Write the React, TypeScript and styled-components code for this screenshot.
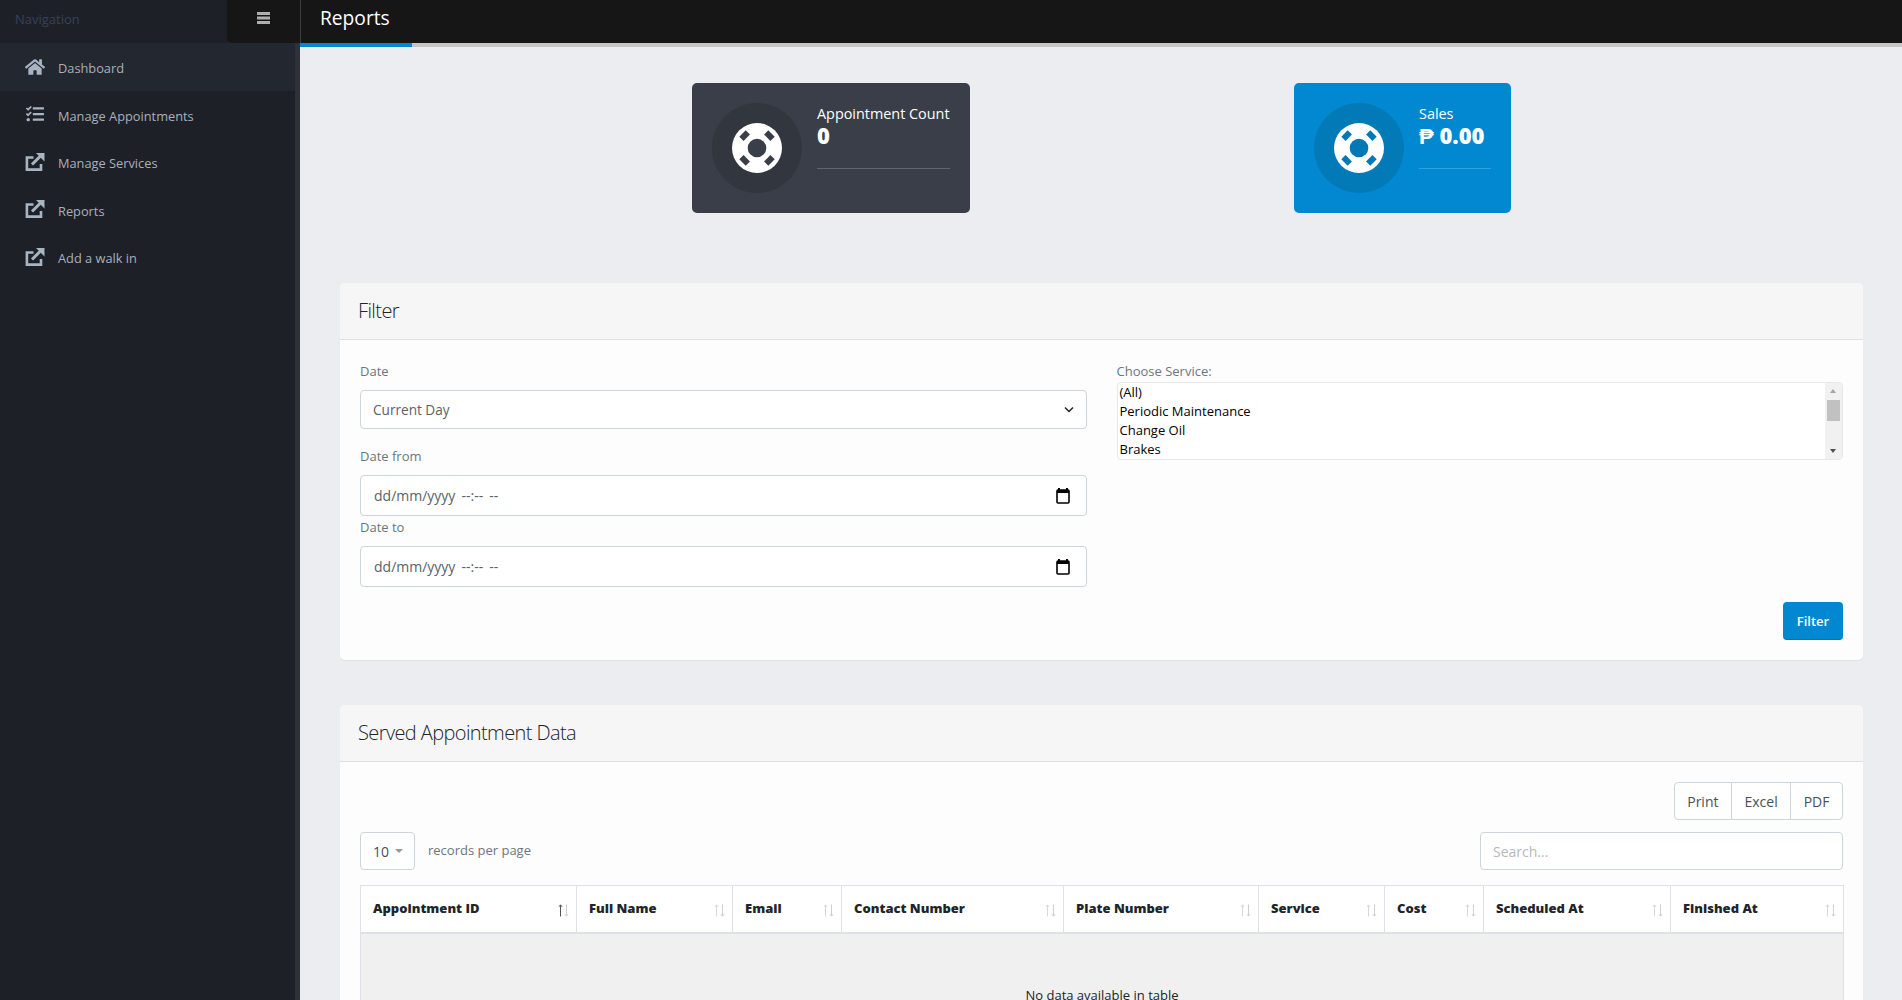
import styled, { createGlobalStyle } from "styled-components";
import { FaHome, FaTasks } from "react-icons/fa";

const GlobalStyle = createGlobalStyle`
    html, body {
        margin: 0;
        height: 100%;
        overflow: hidden;
    }
    body {
        font-family: "Open Sans", "Liberation Sans", sans-serif;
        font-size: 13px;
        color: #495057;
        background: #ebedf1;
        font-variant-ligatures: none;
    }
    * {
        box-sizing: border-box;
    }
`;

const Shell = styled.div`
    display: grid;
    grid-template-columns: 300px 1fr;
    height: 100vh;
    overflow: hidden;
`;

const Sidebar = styled.aside`
    display: flex;
    flex-direction: column;
    background: #1e2028;
    border-right: 5px solid #2e3138;
`;

const SideTop = styled.div`
    display: flex;
    align-items: stretch;
    justify-content: space-between;
    height: 43px;
    margin-right: -5px;
    background: #1e2028;
`;

const SideTitle = styled.span`
    padding: 0 15px;
    line-height: 39px;
    font-size: 13px;
    color: #384058;
`;

const Toggle = styled.button`
    display: flex;
    justify-content: center;
    width: 73px;
    padding: 12px 0 0;
    border: 0;
    border-bottom-left-radius: 5px;
    background: #161616;
`;

const MenuItem = styled.a<{ $active?: boolean }>`
    display: flex;
    align-items: center;
    height: 47.5px;
    padding: 3px 0 0 25px;
    gap: 13px;
    background: ${(props) => (props.$active ? "#232730" : "transparent")};
    color: #a9b0bb;
    font-size: 12.8px;
    svg {
        width: 20px;
        height: 18px;
        margin-top: -3px;
        color: #a9b4c2;
    }
`;

const Main = styled.div`
    min-width: 0;
    display: flex;
    flex-direction: column;
`;

const Topbar = styled.header`
    height: 43px;
    background: #161616;
    border-left: 1px solid #3c3c3c;
    padding-left: 19px;
    font-size: 19.2px;
    line-height: 35px;
    color: #ffffff;
`;

const TabStrip = styled.div`
    height: 4px;
    background: #c6c6c6;
`;

const TabMark = styled.div`
    width: 112px;
    height: 100%;
    background: #0288d1;
`;

const Content = styled.main`
    padding: 36px 39px 0 40px;
`;

const StatsRow = styled.div`
    display: flex;
    justify-content: center;
    gap: 324px;
    margin-bottom: 70px;
`;

const StatCard = styled.div<{ $bg: string }>`
    display: flex;
    gap: 15px;
    height: 130px;
    padding: 20px;
    border-radius: 5px;
    background: ${(props) => props.$bg};
    color: #ffffff;
`;

const StatIcon = styled.div<{ $bg: string }>`
    display: flex;
    align-items: center;
    justify-content: center;
    width: 90px;
    height: 90px;
    border-radius: 50%;
    background: ${(props) => props.$bg};
`;

const StatText = styled.div<{ $width: number }>`
    width: ${(props) => props.$width}px;
    padding-top: 1px;
`;

const StatLabel = styled.div`
    font-size: 14.4px;
    line-height: 20px;
    white-space: nowrap;
`;

const StatValue = styled.div`
    font-size: 22px;
    line-height: 22px;
    font-weight: 800;
    white-space: nowrap;
`;

const StatRule = styled.div`
    height: 1px;
    margin-top: 22px;
    background: rgba(255, 255, 255, 0.2);
`;

const Card = styled.section`
    margin-bottom: 45px;
    border-radius: 5px;
    background: #fdfdfd;
    box-shadow: 0 1px 1px rgba(0, 0, 0, 0.05);
`;

const CardHeader = styled.h2`
    height: 57px;
    margin: 0;
    padding: 0 18px;
    border-bottom: 1px solid #dddfe2;
    border-radius: 5px 5px 0 0;
    background: #f6f6f6;
    font-size: 20px;
    font-weight: 300;
    line-height: 56px;
    letter-spacing: -0.6px;
    color: #212529;
`;

const FilterBody = styled.div`
    padding: 21px 20px 20px 20px;
`;

const FormGrid = styled.div`
    display: grid;
    grid-template-columns: 1fr 1fr;
    column-gap: 30px;
`;

const Column = styled.div`
    display: flex;
    flex-direction: column;
`;

const FieldLabel = styled.label<{ $top?: number; $bottom?: number }>`
    margin-top: ${(props) => props.$top ?? 0}px;
    margin-bottom: ${(props) => props.$bottom ?? 9}px;
    line-height: 20px;
    font-size: 13px;
    color: #6c757d;
`;

const Field = styled.div<{ $height: number }>`
    display: flex;
    align-items: center;
    justify-content: space-between;
    height: ${(props) => props.$height}px;
    padding: 0 12px;
    border: 1px solid #ced4da;
    border-radius: 4px;
    background: #ffffff;
    font-size: 13.6px;
    color: #5a6268;
`;

const DateText = styled.span`
    padding-left: 1px;
    font-size: 14px;
    word-spacing: 2.5px;
`;

const ServiceBox = styled.div`
    position: relative;
    height: 78px;
    border: 1px solid #e6e8ea;
    border-radius: 4px;
    background: #ffffff;
    padding-top: 0;
    overflow: hidden;
`;

const ServiceOption = styled.div`
    padding-left: 2px;
    height: 19px;
    line-height: 19px;
    font-size: 13px;
    color: #000000;
`;

const ScrollTrack = styled.div`
    position: absolute;
    top: 0;
    right: 0;
    bottom: 0;
    width: 17px;
    background: #f1f1f1;
`;

const ScrollThumb = styled.div`
    position: absolute;
    top: 17px;
    left: 2px;
    width: 13px;
    height: 21px;
    background: #c1c1c1;
`;

const ScrollArrow = styled.div<{ $up?: boolean }>`
    position: absolute;
    left: 5px;
    ${(props) => (props.$up ? "top: 6px;" : "bottom: 6px;")}
    width: 0;
    height: 0;
    border-left: 3.5px solid transparent;
    border-right: 3.5px solid transparent;
    ${(props) => (props.$up ? "border-bottom: 4px solid #a3a3a3;" : "border-top: 4px solid #505050;")}
`;

const FilterActions = styled.div`
    display: flex;
    justify-content: flex-end;
    margin-top: 15px;
`;

const PrimaryButton = styled.button`
    width: 60px;
    height: 38px;
    border: 0;
    border-bottom: 1px solid #0277b6;
    border-radius: 4px;
    background: #0288d1;
    font: 600 13px "Open Sans", sans-serif;
    color: #ffffff;
`;

const TableBody = styled.div`
    padding: 20px 20px 0 20px;
`;

const ExportRow = styled.div`
    display: flex;
    justify-content: flex-end;
    margin-bottom: 12px;
`;

const ExportGroup = styled.div`
    display: flex;
    height: 38px;
    border: 1px solid #ced4da;
    border-radius: 4px;
    background: #ffffff;
`;

const ExportButton = styled.button`
    padding: 0 12.5px;
    border: 0;
    border-left: 1px solid #ced4da;
    background: transparent;
    font: 400 14px "Open Sans", sans-serif;
    color: #495057;
    &:first-child {
        border-left: 0;
    }
`;

const TableTools = styled.div`
    display: flex;
    align-items: center;
    justify-content: space-between;
    margin-bottom: 15px;
`;

const PerPage = styled.div`
    display: flex;
    align-items: center;
    gap: 13px;
    color: #6c757d;
    font-size: 13px;
`;

const PerPageText = styled.span`
    margin-top: -2px;
`;

const PageSize = styled.div`
    display: flex;
    align-items: center;
    gap: 6px;
    width: 55px;
    height: 38px;
    padding-left: 12px;
    border: 1px solid #ced4da;
    border-radius: 4px;
    background: #ffffff;
    font-size: 14px;
    color: #495057;
`;

const Caret = styled.span`
    width: 0;
    height: 0;
    border-left: 4px solid transparent;
    border-right: 4px solid transparent;
    border-top: 4px solid #999999;
`;

const SearchBox = styled.input`
    width: 363px;
    height: 38px;
    padding: 0 12px;
    border: 1px solid #ced4da;
    border-radius: 4px;
    background: #ffffff;
    font: 400 14px "Open Sans", sans-serif;
    outline: none;
    &::placeholder {
        color: #b5b9bd;
    }
`;

const DataTable = styled.table`
    width: 100%;
    border-collapse: collapse;
    table-layout: fixed;
    border: 1px solid #dee2e6;
`;

const HeadCell = styled.th`
    height: 47px;
    padding: 0 7px 0 12px;
    border: 1px solid #dee2e6;
    border-bottom-width: 2px;
    background: #ffffff;
    text-align: left;
    font-size: 13px;
    font-weight: 800;
    color: #212529;
`;

const HeadInner = styled.div`
    display: flex;
    align-items: center;
    justify-content: space-between;
    margin-top: -1px;
`;

const SortIcon = styled.svg`
    flex: none;
    margin-top: 5px;
`;

const EmptyCell = styled.td`
    height: 200px;
    padding-top: 52px;
    background: #f0f0f0;
    vertical-align: top;
    text-align: center;
    font-size: 13px;
    color: #212529;
`;

const LifeRing = ({ hole }: { hole: string }): JSX.Element => (
    <svg width="50" height="50" viewBox="0 0 50 50">
        <circle cx="25" cy="25" r="25" fill="#ffffff" />
        <circle cx="25" cy="25" r="9.3" fill={hole} />
        {[45, 135, 225, 315].map((a) => (
            <rect key={a} x="20.5" y="4.5" width="9" height="6" fill={hole} transform={`rotate(${a} 25 25)`} />
        ))}
    </svg>
);

const CalendarIcon = (): JSX.Element => (
    <svg width="14" height="16" viewBox="0 0 14 16" style={{ marginRight: 4 }}>
        <path d="M3 0v2M11 0v2" stroke="#000" strokeWidth="2" />
        <rect x="1" y="2" width="12" height="13" rx="1" fill="none" stroke="#000" strokeWidth="1.6" />
        <rect x="1" y="2" width="12" height="3" fill="#000" />
    </svg>
);

const ChevronIcon = (): JSX.Element => (
    <svg width="10" height="7" viewBox="0 0 10 7">
        <path d="M1 1.5l4 4 4-4" fill="none" stroke="#222" strokeWidth="1.5" />
    </svg>
);

const BarsIcon = (): JSX.Element => (
    <svg width="13" height="12" viewBox="0 0 13 12">
        <path d="M0 0h13v3H0zM0 4.5h13v3H0zM0 9h13v3H0z" fill="#aeaeae" />
    </svg>
);

const LinkIcon = (): JSX.Element => (
    <svg viewBox="0 0 19 18">
        <path d="M8 4.5H1.4V16.6H15.5V11" fill="none" stroke="currentColor" strokeWidth="2.6" />
        <path d="M6.5 11.5L15 3" fill="none" stroke="currentColor" strokeWidth="3" />
        <path d="M10.5 0H19V8.5z" fill="currentColor" />
    </svg>
);

const SortArrows = ({ active }: { active?: boolean }): JSX.Element => (
    <SortIcon width="11" height="13" viewBox="0 0 11 13">
        <path d="M2.5 12.5V1M1 2.8l1.5-2 1.5 2" fill="none" stroke={active ? "#555" : "#d8d8d8"} strokeWidth="1" />
        <path d="M8.5 0.5V12M7 10.2l1.5 2 1.5-2" fill="none" stroke="#cfcfcf" strokeWidth="1" />
    </SortIcon>
);

const menu = [
    { label: "Dashboard", icon: <FaHome />, active: true },
    { label: "Manage Appointments", icon: <FaTasks /> },
    { label: "Manage Services", icon: <LinkIcon /> },
    { label: "Reports", icon: <LinkIcon /> },
    { label: "Add a walk in", icon: <LinkIcon /> },
];

const columns = [
    { label: "Appointment ID", width: 216 },
    { label: "Full Name", width: 156 },
    { label: "Email", width: 109 },
    { label: "Contact Number", width: 222 },
    { label: "Plate Number", width: 195 },
    { label: "Service", width: 126 },
    { label: "Cost", width: 99 },
    { label: "Scheduled At", width: 187 },
    { label: "Finished At", width: 173 },
];

const services = ["(All)", "Periodic Maintenance", "Change Oil", "Brakes"];

const App = (): JSX.Element => {
    return (
        <Shell>
            <GlobalStyle />
            <Sidebar>
                <SideTop>
                    <SideTitle>Navigation</SideTitle>
                    <Toggle>
                        <BarsIcon />
                    </Toggle>
                </SideTop>
                {menu.map((item) => (
                    <MenuItem key={item.label} $active={item.active}>
                        {item.icon}
                        {item.label}
                    </MenuItem>
                ))}
            </Sidebar>
            <Main>
                <Topbar>Reports</Topbar>
                <TabStrip>
                    <TabMark />
                </TabStrip>
                <Content>
                    <StatsRow>
                        <StatCard $bg="#393e49">
                            <StatIcon $bg="#32373f">
                                <LifeRing hole="#393e49" />
                            </StatIcon>
                            <StatText $width={133}>
                                <StatLabel>Appointment Count</StatLabel>
                                <StatValue>0</StatValue>
                                <StatRule />
                            </StatText>
                        </StatCard>
                        <StatCard $bg="#0288d1">
                            <StatIcon $bg="#027ab8">
                                <LifeRing hole="#0278b6" />
                            </StatIcon>
                            <StatText $width={72}>
                                <StatLabel>Sales</StatLabel>
                                <StatValue>₱ 0.00</StatValue>
                                <StatRule />
                            </StatText>
                        </StatCard>
                    </StatsRow>

                    <Card>
                        <CardHeader>Filter</CardHeader>
                        <FilterBody>
                            <FormGrid>
                                <Column>
                                    <FieldLabel>Date</FieldLabel>
                                    <Field $height={39}>
                                        Current Day
                                        <ChevronIcon />
                                    </Field>
                                    <FieldLabel $top={17}>Date from</FieldLabel>
                                    <Field $height={41}>
                                        <DateText>dd/mm/yyyy --:-- --</DateText>
                                        <CalendarIcon />
                                    </Field>
                                    <FieldLabel $top={1}>Date to</FieldLabel>
                                    <Field $height={41}>
                                        <DateText>dd/mm/yyyy --:-- --</DateText>
                                        <CalendarIcon />
                                    </Field>
                                </Column>
                                <Column>
                                    <FieldLabel $bottom={1}>Choose Service:</FieldLabel>
                                    <ServiceBox>
                                        {services.map((s) => (
                                            <ServiceOption key={s}>{s}</ServiceOption>
                                        ))}
                                        <ScrollTrack>
                                            <ScrollArrow $up />
                                            <ScrollThumb />
                                            <ScrollArrow />
                                        </ScrollTrack>
                                    </ServiceBox>
                                </Column>
                            </FormGrid>
                            <FilterActions>
                                <PrimaryButton>Filter</PrimaryButton>
                            </FilterActions>
                        </FilterBody>
                    </Card>

                    <Card>
                        <CardHeader>Served Appointment Data</CardHeader>
                        <TableBody>
                            <ExportRow>
                                <ExportGroup>
                                    <ExportButton>Print</ExportButton>
                                    <ExportButton>Excel</ExportButton>
                                    <ExportButton>PDF</ExportButton>
                                </ExportGroup>
                            </ExportRow>
                            <TableTools>
                                <PerPage>
                                    <PageSize>
                                        10
                                        <Caret />
                                    </PageSize>
                                    <PerPageText>records per page</PerPageText>
                                </PerPage>
                                <SearchBox placeholder="Search..." />
                            </TableTools>
                            <DataTable>
                                <colgroup>
                                    {columns.map((c) => (
                                        <col key={c.label} width={c.width} />
                                    ))}
                                </colgroup>
                                <thead>
                                    <tr>
                                        {columns.map((c, i) => (
                                            <HeadCell key={c.label}>
                                                <HeadInner>
                                                    {c.label}
                                                    <SortArrows active={i === 0} />
                                                </HeadInner>
                                            </HeadCell>
                                        ))}
                                    </tr>
                                </thead>
                                <tbody>
                                    <tr>
                                        <EmptyCell colSpan={9}>No data available in table</EmptyCell>
                                    </tr>
                                </tbody>
                            </DataTable>
                        </TableBody>
                    </Card>
                </Content>
            </Main>
        </Shell>
    );
};

export default App;
